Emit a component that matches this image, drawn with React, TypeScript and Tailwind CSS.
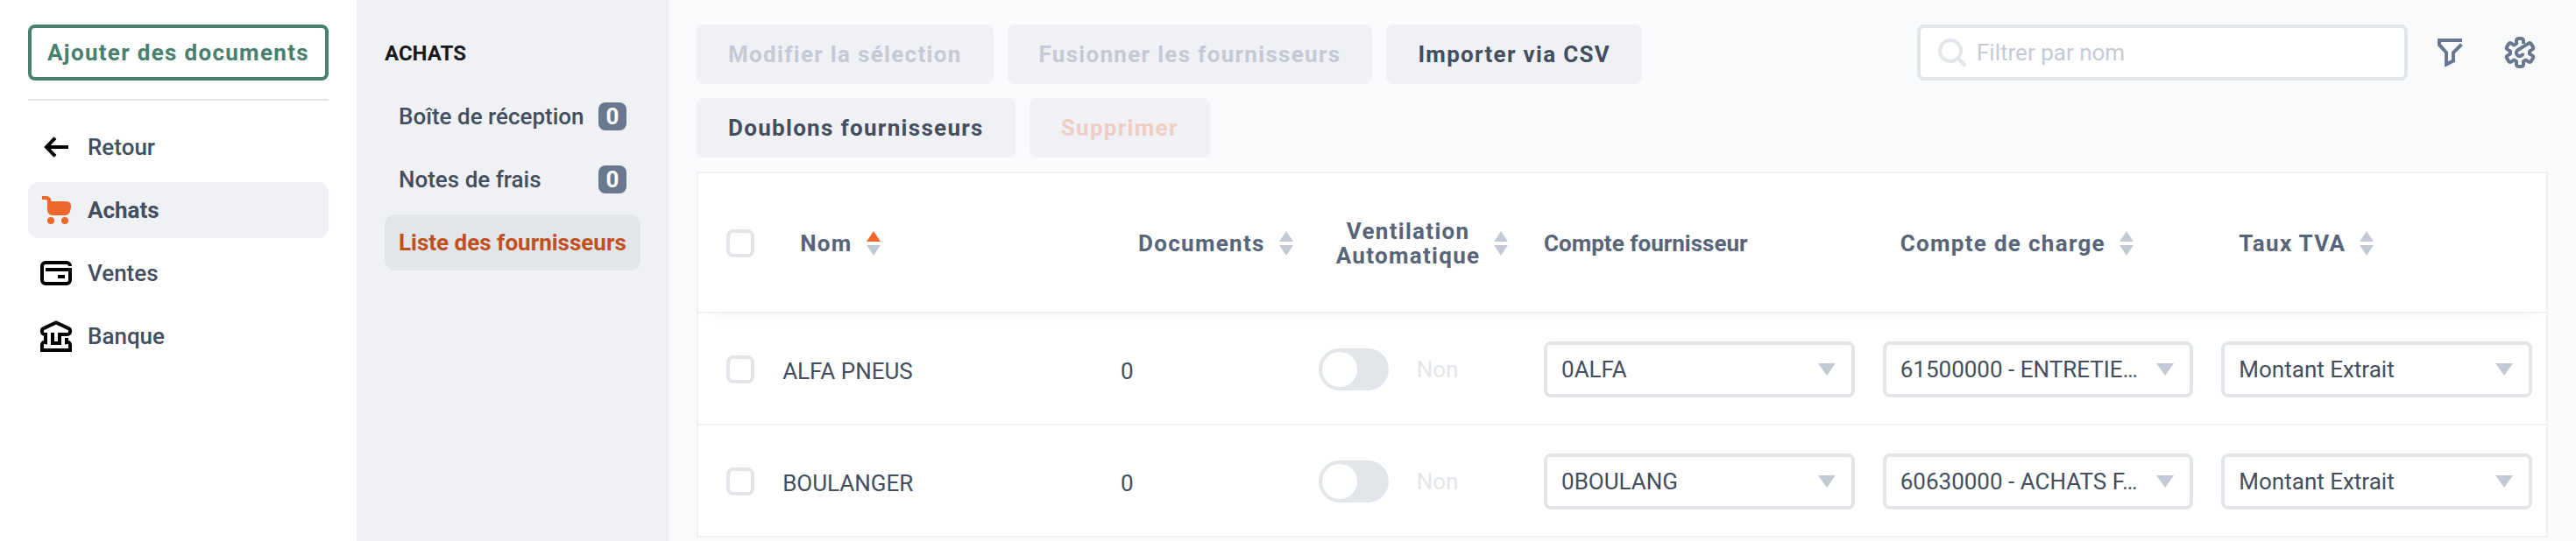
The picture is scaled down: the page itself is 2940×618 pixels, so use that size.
import { useState, type ReactNode } from "react";
import clsx from "clsx";

interface Supplier {
    name: string;
    documents: number;
    supplierAccount: string;
    expenseAccount: string;
    vat: string;
}

const SUPPLIERS: Supplier[] = [
    {
        name: "ALFA PNEUS",
        documents: 0,
        supplierAccount: "0ALFA",
        expenseAccount: "61500000 - ENTRETIE…",
        vat: "Montant Extrait",
    },
    {
        name: "BOULANGER",
        documents: 0,
        supplierAccount: "0BOULANG",
        expenseAccount: "60630000 - ACHATS F…",
        vat: "Montant Extrait",
    },
];

const INBOX_LINKS = [
    { label: "Boîte de réception", count: 0 },
    { label: "Notes de frais", count: 0 },
    { label: "Liste des fournisseurs", active: true },
];

function Icon({ children, className }: { children: ReactNode; className?: string }) {
    return (
        <svg
            viewBox="0 0 24 24"
            fill="none"
            stroke="currentColor"
            strokeWidth="2"
            className={clsx("size-12 shrink-0", className)}
            aria-hidden="true"
        >
            {children}
        </svg>
    );
}

const BackIcon = () => (
    <Icon>
        <path d="M19 12H6.5M11.5 6.8 6.5 12l5 5.2" />
    </Icon>
);

const CartIcon = () => (
    <Icon className="text-[#ee6629]">
        <path
            fill="currentColor"
            stroke="none"
            d="M4 4h2.5A2.7 2.7 0 0 1 9.2 7h8.3c2.2 0 3.3 1.4 3 3.3l-.4 1.9A3.5 3.5 0 0 1 16.7 15H10a3 3 0 0 1-3-3V7a1 1 0 0 0-1-1H4z"
        />
        <circle cx="9" cy="18" r="2" fill="currentColor" stroke="none" />
        <circle cx="17" cy="18" r="2" fill="currentColor" stroke="none" />
    </Icon>
);

const CardIcon = () => (
    <Icon>
        <path d="M20 8a2 2 0 0 0-2-2H6a2 2 0 0 0-2 2v8a2 2 0 0 0 2 2h12a2 2 0 0 0 2-2v-6H6" />
        <path d="M13 14h4" />
    </Icon>
);

const BankIcon = () => (
    <Icon>
        <path d="M14 15.5V11h4.500A1.500 1.500 0 0 0 20 9.500V8.600a1 1 0 0 0-.6-.9L12 4.200 4.600 7.700a1 1 0 0 0-.6.9v.9A1.500 1.500 0 0 0 5.500 11H6v4.500A1.500 1.500 0 0 0 4 17v3h16v-3a1.500 1.500 0 0 0-2-1.500V13" />
        <path d="M10 10v6h4v-6" />
    </Icon>
);

const SearchIcon = () => (
    <Icon className="text-[#e2e5ea]">
        <circle cx="11" cy="11" r="6" />
        <path d="m15 15 4.5 4.5" />
    </Icon>
);

const FilterIcon = () => (
    <Icon>
        <path d="M19 5H6v2.6l4 4.4v6.7l4-2V12l4.700-4.600" />
    </Icon>
);

const GearIcon = () => (
    <Icon>
        <path
            strokeLinejoin="round"
            d="M14 7V5.200a1.200 1.200 0 0 0-1.200-1.200h-1.600A1.200 1.200 0 0 0 10 5.200V7l-1.300.7-1.600-.9a1.200 1.200 0 0 0-1.600.4l-.9 1.500a1.200 1.200 0 0 0 .4 1.600l1.500.9v1.600l-1.500.9a1.200 1.200 0 0 0-.4 1.600l.9 1.500a1.200 1.200 0 0 0 1.600.4l1.600-.9 1.300.7v1.800a1.200 1.200 0 0 0 1.200 1.200h1.600a1.200 1.200 0 0 0 1.200-1.200V17l1.300-.7 1.600.9a1.200 1.200 0 0 0 1.600-.4l.9-1.500a1.200 1.200 0 0 0-.4-1.600l-1.500-.9v-1.600l1.500-.9a1.200 1.200 0 0 0 .4-1.600l-.9-1.500a1.200 1.200 0 0 0-1.600-.4l-6 3.700a1.900 1.900 0 1 0 2.800 1.800"
        />
    </Icon>
);

interface SidebarLinkProps {
    icon: ReactNode;
    label: string;
    active?: boolean;
}

function SidebarLink({ icon, label, active }: SidebarLinkProps) {
    return (
        <a
            href="#"
            className={clsx(
                "flex h-16 items-center gap-3 rounded-xl px-2",
                active ? "bg-[#f0f1f5] font-bold" : "font-medium"
            )}
        >
            <span className="text-black">{icon}</span>
            {label}
        </a>
    );
}

function ToolbarButton({ label, disabled, danger }: { label: string; disabled?: boolean; danger?: boolean }) {
    return (
        <button
            type="button"
            disabled={disabled}
            className={clsx(
                "h-17 rounded-lg bg-[#f0f1f5] px-9 font-bold tracking-wider whitespace-nowrap",
                danger ? "text-[#efcdc3]" : disabled ? "text-[#c4cad5]" : "text-[#434e5e]"
            )}
        >
            {label}
        </button>
    );
}

function Checkbox({ label }: { label: string }) {
    return (
        <input
            type="checkbox"
            aria-label={label}
            className="block size-8 appearance-none rounded-lg border-4 border-[#e2e5ea] bg-white checked:bg-[#ee6629]"
        />
    );
}

function SortHeader({ label, sorted }: { label: string; sorted?: boolean }) {
    return (
        <button type="button" className="flex items-center gap-4 px-5 font-bold tracking-wider">
            <span className="text-center leading-7">{label}</span>
            <svg viewBox="0 0 16 28" className="h-7 w-4 shrink-0" aria-hidden="true">
                <path d="M8 0l8 12H0z" fill={sorted ? "#ee6629" : "#c4cad5"} />
                <path d="M8 28l8-12H0z" fill="#c4cad5" />
            </svg>
        </button>
    );
}

function Dropdown({ label, value }: { label: string; value: string }) {
    return (
        <div className="relative">
            <select
                aria-label={label}
                className="block h-16 w-full appearance-none rounded-lg border-4 border-[#e2e5ea] bg-white pr-12 pl-4 text-[#434e5e]"
            >
                <option>{value}</option>
            </select>
            <svg
                viewBox="0 0 20 14"
                className="pointer-events-none absolute inset-y-0 right-[22px] my-auto h-3.5 w-5"
                aria-hidden="true"
            >
                <path d="M0 0h20L10 14z" fill="#c4cad5" />
            </svg>
        </div>
    );
}

function Toggle({ label }: { label: string }) {
    const [on, setOn] = useState(false);

    return (
        <label className="flex items-center gap-8 text-[#e2e5ea]">
            <input
                type="checkbox"
                role="switch"
                aria-label={label}
                checked={on}
                onChange={(e) => setOn(e.target.checked)}
                className="flex h-12 w-20 appearance-none rounded-full bg-[#e2e5ea] p-1 before:size-10 before:rounded-full before:bg-white checked:justify-end checked:bg-[#47806c]"
            />
            {on ? "Oui" : "Non"}
        </label>
    );
}

function SupplierRow({ supplier }: { supplier: Supplier }) {
    return (
        <tr className="h-32 *:border-b-2 *:border-[#f0f1f5] *:px-4 *:pt-0.5">
            <td>
                <div className="pl-4">
                    <Checkbox label={`Sélectionner ${supplier.name}`} />
                </div>
            </td>
            <td>
                <div className="pt-1">{supplier.name}</div>
            </td>
            <td>
                <div className="pt-1">{supplier.documents}</div>
            </td>
            <td>
                <Toggle label={`Ventilation automatique ${supplier.name}`} />
            </td>
            <td>
                <Dropdown label="Compte fournisseur" value={supplier.supplierAccount} />
            </td>
            <td>
                <Dropdown label="Compte de charge" value={supplier.expenseAccount} />
            </td>
            <td>
                <Dropdown label="Taux TVA" value={supplier.vat} />
            </td>
        </tr>
    );
}

export default function App() {
    return (
        <div className="flex min-h-screen bg-[#f9fafc] font-[Roboto,sans-serif] text-[26px] leading-8 text-[#434e5e]">
            {/* Main navigation */}
            <aside className="w-[407px] shrink-0 bg-white px-8 pt-7">
                <button
                    type="button"
                    className="h-16 w-full rounded-lg border-4 border-[#47806c] font-bold tracking-wider whitespace-nowrap text-[#47806c]"
                >
                    Ajouter des documents
                </button>
                <hr className="my-[21px] border-t-2 border-[#e2e5ea]" />
                <nav className="flex flex-col gap-2">
                    <SidebarLink icon={<BackIcon />} label="Retour" />
                    <SidebarLink icon={<CartIcon />} label="Achats" active />
                    <SidebarLink icon={<CardIcon />} label="Ventes" />
                    <SidebarLink icon={<BankIcon />} label="Banque" />
                </nav>
            </aside>

            {/* Section navigation */}
            <aside className="w-[356px] shrink-0 bg-[#f0f1f5] px-8 pt-[45px]">
                <h2 className="mb-6 text-2xl font-bold text-[#17191c]">ACHATS</h2>
                <nav className="flex flex-col gap-2">
                    {INBOX_LINKS.map((link) => (
                        <a
                            key={link.label}
                            href="#"
                            className={clsx(
                                "flex h-16 items-center justify-between rounded-xl px-4 whitespace-nowrap",
                                link.active ? "bg-[#e2e5ea] font-bold text-[#c05020]" : "font-medium"
                            )}
                        >
                            {link.label}
                            {link.count !== undefined && (
                                <span className="size-8 rounded-lg bg-[#69778f] text-center font-bold text-white">
                                    {link.count}
                                </span>
                            )}
                        </a>
                    ))}
                </nav>
            </aside>

            <main className="min-w-0 flex-1 px-8 pt-7">
                {/* Toolbar */}
                <div className="mb-4 flex items-start justify-between">
                    <div className="flex max-w-[1200px] flex-wrap gap-4">
                        <ToolbarButton label="Modifier la sélection" disabled />
                        <ToolbarButton label="Fusionner les fournisseurs" disabled />
                        <ToolbarButton label="Importer via CSV" />
                        <ToolbarButton label="Doublons fournisseurs" />
                        <ToolbarButton label="Supprimer" disabled danger />
                    </div>
                    <div className="flex items-center gap-6 pr-2 text-[#69778f]">
                        <label className="flex h-16 w-[560px] items-center rounded-lg border-4 border-[#e2e5ea] bg-white px-3">
                            <SearchIcon />
                            <input
                                type="text"
                                aria-label="Filtrer par nom"
                                placeholder="Filtrer par nom"
                                className="min-w-0 flex-1 pl-1 outline-none placeholder:text-[#c4cad5]"
                            />
                        </label>
                        <div className="flex gap-8">
                            <button type="button" aria-label="Filtrer">
                                <FilterIcon />
                            </button>
                            <button type="button" aria-label="Paramètres">
                                <GearIcon />
                            </button>
                        </div>
                    </div>
                </div>

                {/* Suppliers */}
                <div className="border-2 border-b-0 border-[#f0f1f5] bg-white">
                    <table className="w-full table-fixed border-separate border-spacing-0">
                        <colgroup>
                            <col className="w-[3.8%]" />
                            <col className="w-[18.3%]" />
                            <col className="w-[10.7%]" />
                            <col className="w-[12.2%]" />
                            <col />
                            <col />
                            <col />
                        </colgroup>
                        <thead className="text-left text-[#586579] shadow-[0_16px_16px_-16px_rgba(0,0,0,0.06)]">
                            <tr className="h-40 *:border-b-2 *:border-[#f0f1f5] *:px-4 *:pt-0.5">
                                <th>
                                    <div className="pl-4">
                                        <Checkbox label="Tout sélectionner" />
                                    </div>
                                </th>
                                <th>
                                    <SortHeader label="Nom" sorted />
                                </th>
                                <th>
                                    <SortHeader label="Documents" />
                                </th>
                                <th>
                                    <SortHeader label="Ventilation Automatique" />
                                </th>
                                <th>Compte fournisseur</th>
                                <th>
                                    <SortHeader label="Compte de charge" />
                                </th>
                                <th>
                                    <SortHeader label="Taux TVA" />
                                </th>
                            </tr>
                        </thead>
                        <tbody>
                            {SUPPLIERS.map((supplier) => (
                                <SupplierRow key={supplier.name} supplier={supplier} />
                            ))}
                        </tbody>
                    </table>
                </div>
            </main>
        </div>
    );
}
